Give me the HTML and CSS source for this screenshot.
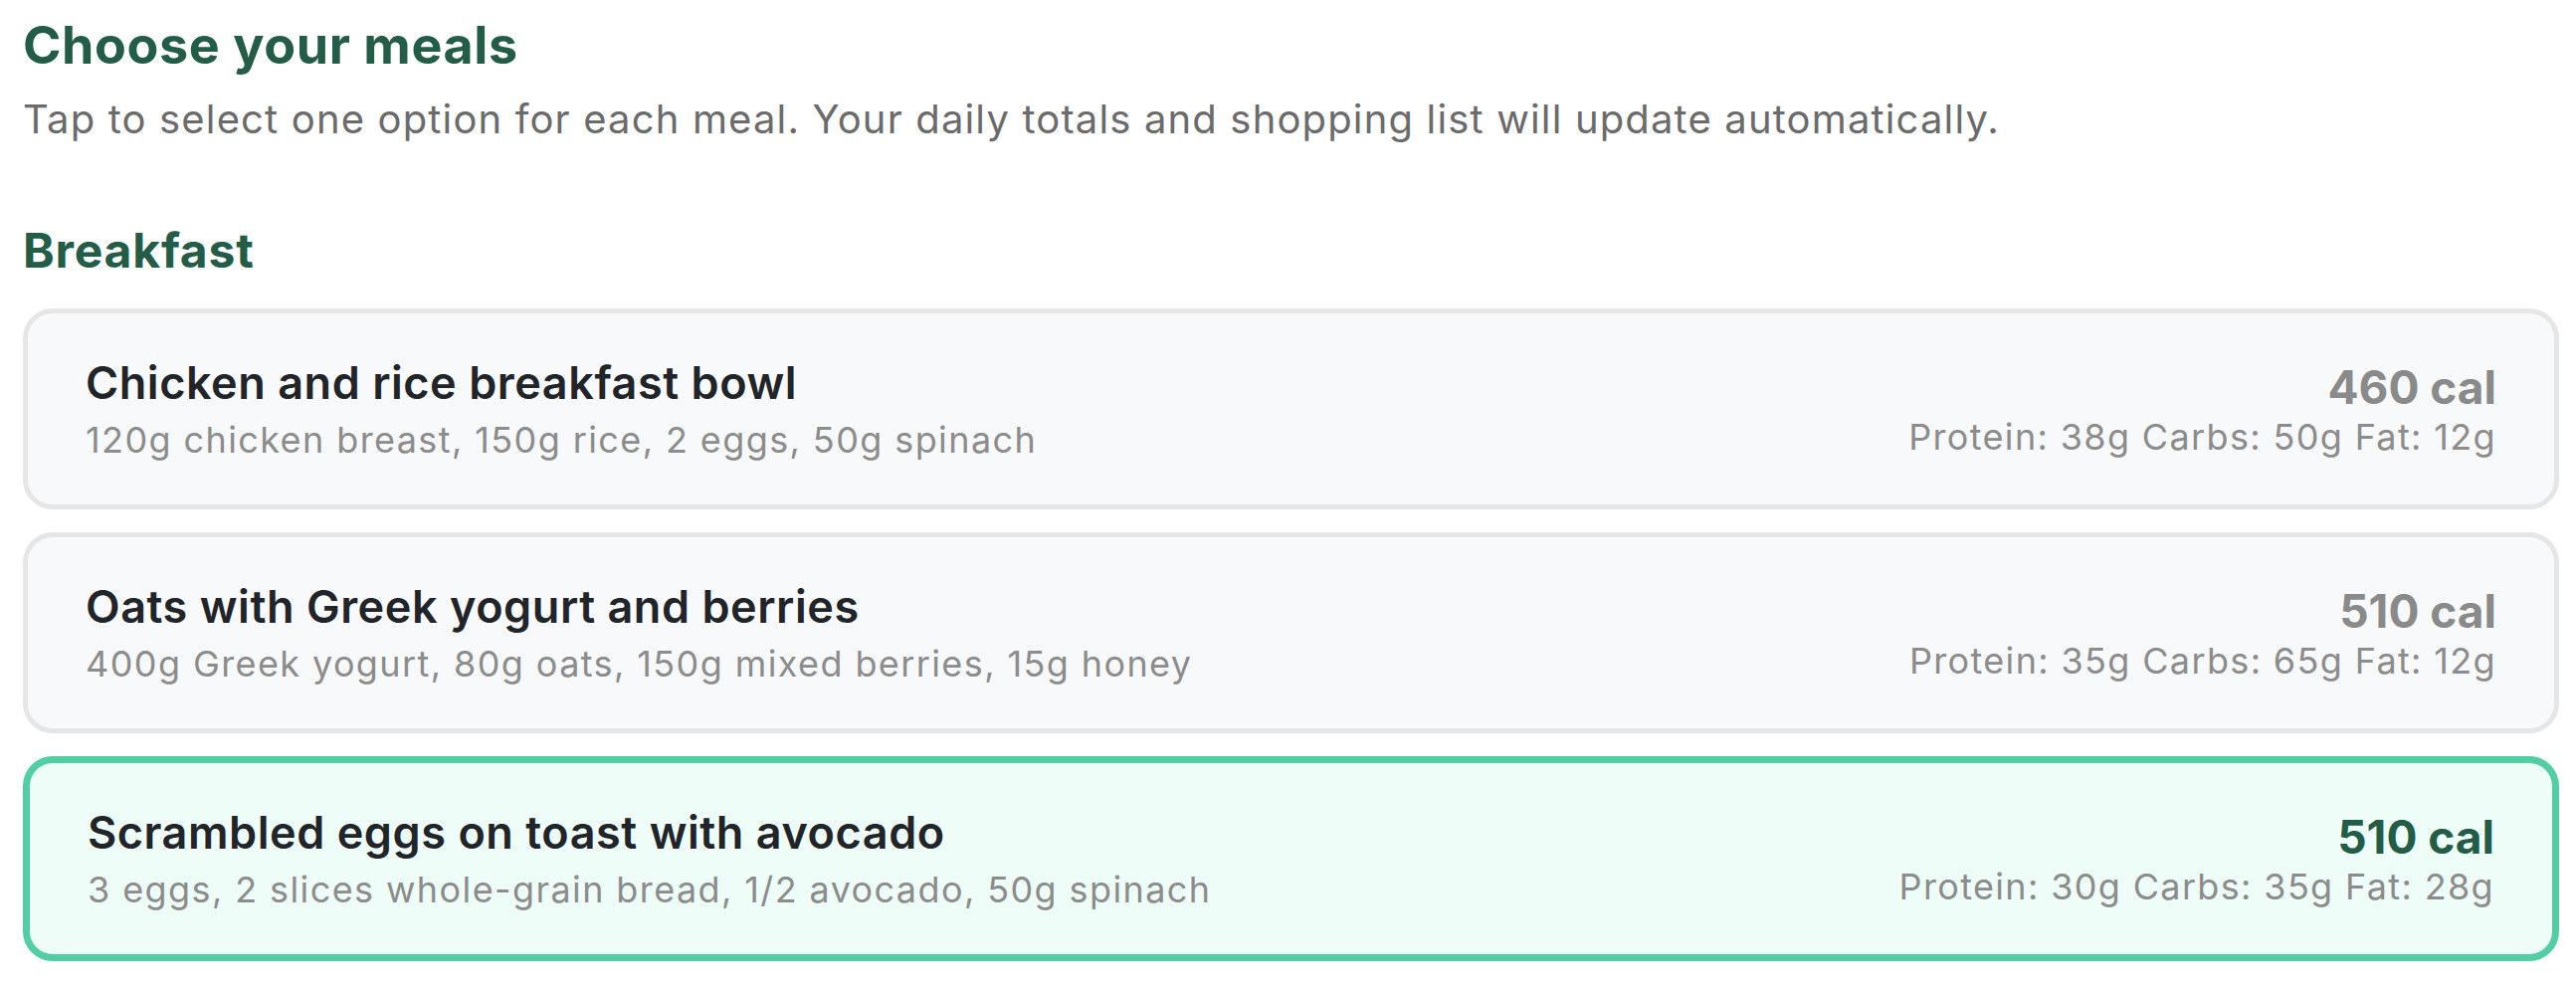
FILE: index.html
```html
<!DOCTYPE html>
<html>
<head>
  <link rel="stylesheet" href="styles.css">
</head>
<body>
  <h1 class="title">Choose your meals</h1>
  <p class="subtitle">Tap to select one option for each meal. Your daily totals and shopping list will update automatically.</p>

  <h2 class="section-title">Breakfast</h2>
  <div class="meal-list">
    <div class="meal">
      <div class="meal-info">
        <div class="meal-name">Chicken and rice breakfast bowl</div>
        <div class="meal-items">120g chicken breast, 150g rice, 2 eggs, 50g spinach</div>
      </div>
      <div class="meal-stats">
        <div class="meal-cal">460 cal</div>
        <div class="meal-macros">Protein: 38g Carbs: 50g Fat: 12g</div>
      </div>
    </div>
    <div class="meal">
      <div class="meal-info">
        <div class="meal-name">Oats with Greek yogurt and berries</div>
        <div class="meal-items">400g Greek yogurt, 80g oats, 150g mixed berries, 15g honey</div>
      </div>
      <div class="meal-stats">
        <div class="meal-cal">510 cal</div>
        <div class="meal-macros">Protein: 35g Carbs: 65g Fat: 12g</div>
      </div>
    </div>
    <div class="meal selected">
      <div class="meal-info">
        <div class="meal-name">Scrambled eggs on toast with avocado</div>
        <div class="meal-items">3 eggs, 2 slices whole-grain bread, 1/2 avocado, 50g spinach</div>
      </div>
      <div class="meal-stats">
        <div class="meal-cal">510 cal</div>
        <div class="meal-macros">Protein: 30g Carbs: 35g Fat: 28g</div>
      </div>
    </div>
  </div>
</body>
</html>
```

FILE: styles.css
```css
body {
  margin: 0;
  padding: 14px 17px 0 23px;
  background-color: white;
  font-family: Inter, "Noto Sans", sans-serif;
  color: #212529;
}

.title {
  font-size: 52px;
  line-height: 63px;
  font-weight: 700;
  letter-spacing: 0.6px;
  color: #235c47;
  margin: 0;
}

.subtitle {
  font-size: 40px;
  line-height: 48px;
  letter-spacing: 1.15px;
  color: #6b6b6b;
  margin: 19px 0 0 0;
}

.section-title {
  font-size: 48px;
  line-height: 58px;
  font-weight: 700;
  letter-spacing: 0.8px;
  color: #235c47;
  margin: 79px 0 29px 0;
}

.meal-list {
  display: flex;
  flex-direction: column;
  gap: 23px;
}

.meal {
  display: flex;
  justify-content: space-between;
  align-items: center;
  padding: 43px 58px;
  background-color: #f8f9fa;
  border: 5px solid #e6e6e6;
  border-radius: 30px;
  cursor: pointer;
}

.meal.selected {
  background-color: #effdf8;
  border: 7px solid #52cea5;
}

.meal-name {
  font-size: 45px;
  line-height: 54px;
  font-weight: 600;
  letter-spacing: 0.55px;
  color: #212529;
}

.meal-items {
  font-size: 36px;
  line-height: 44px;
  letter-spacing: 1.4px;
  color: #8c8c8c;
  margin-top: 8px;
}

.meal-stats {
  display: flex;
  flex-direction: column;
  align-items: flex-end;
}

.meal-cal {
  font-size: 46px;
  line-height: 56px;
  font-weight: 700;
  color: #8a8a8a;
}

.selected .meal-cal {
  color: #235c47;
}

.meal-macros {
  font-size: 36px;
  line-height: 44px;
  letter-spacing: 1.35px;
  color: #8c8c8c;
}
```
